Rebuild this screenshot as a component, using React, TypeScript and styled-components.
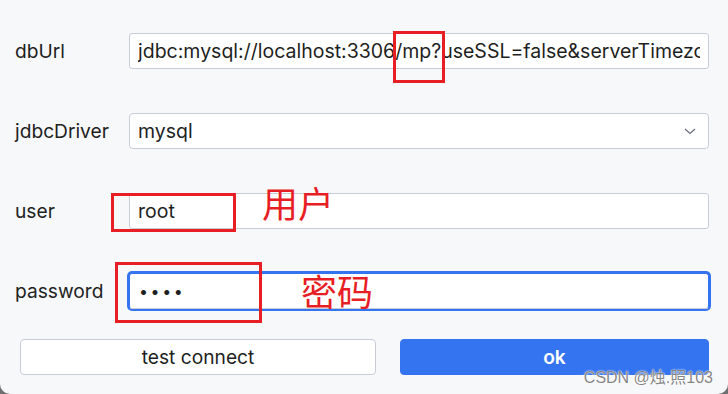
import React from 'react';
import styled, { createGlobalStyle } from 'styled-components';

const color = {
    page: '#f7f8fa',
    border: '#c9ccd6',
    text: '#1e1f22',
    focus: '#3574f0',
    mark: '#e81e25',
};

const GlobalStyle = createGlobalStyle`
    html, body { margin: 0; padding: 0; background: #6f6f6f; }
    * { box-sizing: border-box; }
`;

const Window = styled.div`
    position: relative;
    width: 728px;
    height: 394px;
    overflow: hidden;
    background: ${ color.page };
    border-radius: 0 0 10px 10px;
    font-family: Inter, "Noto Sans", sans-serif;
    color: ${ color.text };
`;

const Form = styled.div`
    display: grid;
    grid-template-columns: 114px 1fr;
    grid-auto-rows: 36px;
    row-gap: 44px;
    align-items: center;
    padding: 33px 19px 0 15px;
`;

const Label = styled.label`
    font-size: 19.2px;
    line-height: 36px;
`;

const Field = styled.input<{ $focused?: boolean }>`
    width: 100%;
    height: 36px;
    margin: 0;
    padding: 0 8px;
    font-family: inherit;
    font-size: 19.5px;
    color: ${ color.text };
    background: #fff;
    border: 1px solid ${ p => p.$focused ? color.focus : color.border };
    border-bottom-color: ${ color.border };
    border-radius: 3px;
    box-shadow: ${ p => p.$focused ? `0 0 0 2px ${ color.focus }` : 'none' };
    outline: none;

    &[type="password"] {
        font-size: 16px;
        letter-spacing: 2.6px;
        padding-left: 9px;
    }
`;

const Select = styled.div`
    display: flex;
    align-items: center;
    justify-content: space-between;
    height: 36px;
    padding: 0 12px 0 8px;
    font-size: 19.5px;
    background: #fff;
    border: 1px solid ${ color.border };
    border-radius: 4px;
`;

const Buttons = styled.div`
    display: grid;
    grid-template-columns: 356px 309px;
    column-gap: 24px;
    padding: 30px 0 0 20px;
`;

const Button = styled.button<{ $primary?: boolean }>`
    height: 36px;
    margin: 0;
    font-family: inherit;
    font-size: 19.2px;
    font-weight: ${ p => p.$primary ? 600 : 400 };
    color: ${ p => p.$primary ? '#fff' : color.text };
    background: ${ p => p.$primary ? color.focus : '#fff' };
    border: 1px solid ${ p => p.$primary ? color.focus : color.border };
    border-radius: 4px;
`;

const Mark = styled.div`
    position: absolute;
    border: 3px solid ${ color.mark };
    pointer-events: none;
`;

const Note = styled.div`
    position: absolute;
    font-family: "Noto Sans CJK SC", sans-serif;
    font-weight: 400;
    font-size: 36px;
    line-height: 1;
    color: ${ color.mark };
`;

const Watermark = styled.div`
    position: absolute;
    right: 15px;
    bottom: 6px;
    font-family: "Liberation Sans", "Noto Sans CJK SC", sans-serif;
    font-size: 16px;
    color: rgba(110, 110, 110, 0.85);
    text-shadow: 0 0 2px #fff, 0 0 1px #fff;
`;

const Chevron = () => (
    <svg width="12" height="7" viewBox="0 0 12 7">
        <path d="M1 1 L6 5.5 L11 1" fill="none" stroke="#6c707e" strokeWidth="1.3" />
    </svg>
);

export default function App() {
    return (
        <>
            <GlobalStyle />
            <Window>
                <Form>
                    <Label>dbUrl</Label>
                    <Field readOnly value="jdbc:mysql://localhost:3306/mp?useSSL=false&serverTimezone=UTC" />

                    <Label>jdbcDriver</Label>
                    <Select>
                        <span>mysql</span>
                        <Chevron />
                    </Select>

                    <Label>user</Label>
                    <Field readOnly value="root" />

                    <Label>password</Label>
                    <Field readOnly type="password" value="1234" $focused />
                </Form>

                <Buttons>
                    <Button>test connect</Button>
                    <Button $primary>ok</Button>
                </Buttons>

                <Mark style={{ left: 393, top: 31, width: 52, height: 52 }} />
                <Mark style={{ left: 111, top: 193, width: 125, height: 39 }} />
                <Mark style={{ left: 115, top: 262, width: 147, height: 61 }} />
                <Note style={{ left: 262, top: 184 }}>用户</Note>
                <Note style={{ left: 301, top: 272 }}>密码</Note>

                <Watermark>CSDN @烛.照103</Watermark>
            </Window>
        </>
    );
}
